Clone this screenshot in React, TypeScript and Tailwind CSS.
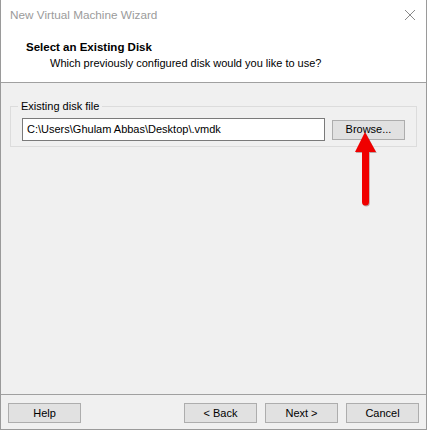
import React from 'react';

const font = { fontFamily: '"Liberation Sans", Arial, sans-serif' };

const WinButton: React.FC<{ label: string; className?: string }> = ({ label, className = '' }) => (
  <button
    className={`h-[20px] w-[73px] border border-[#adadad] bg-[#e1e1e1] text-[11px] leading-none text-black ${className}`}
  >
    {label}
  </button>
);

const App: React.FC = () => {
  return (
    <div className="w-[428px] h-[430px] bg-white" style={font}>
      <div className="relative flex h-full w-[427px] flex-col border border-t-0 border-[#9a9a9a] bg-[#f0f0f0]">
        {/* title bar + header */}
        <div className="h-[83px] border-b border-[#a0a0a0] bg-white">
          <div className="flex h-[30px] items-center justify-between pl-[9px] pr-[9px]">
            <span className="text-[11.75px] text-[#9b9b9b]">New Virtual Machine Wizard</span>
            <svg width="12" height="12" viewBox="0 0 12 12" className="mr-[1px]">
              <path d="M1 1 L11 11 M11 1 L1 11" stroke="#8a8a8a" strokeWidth="1" />
            </svg>
          </div>
          <div className="pl-[25px] pt-[9px]">
            <div className="text-[11.5px] font-bold leading-[16px] text-black">Select an Existing Disk</div>
            <div className="pl-[24px] text-[11px] leading-[16px] text-black">
              Which previously configured disk would you like to use?
            </div>
          </div>
        </div>

        {/* body */}
        <div className="flex-1 px-[9px] pt-[16px]">
          <fieldset className="h-[48px] border border-[#dcdcdc] px-[11px] pb-0 pt-0">
            <legend className="-ml-[4px] px-[3px] text-[11px] leading-[14px] text-black">Existing disk file</legend>
            <div className="mt-[5px] flex items-center gap-[7px]">
              <div className="flex h-[23px] w-[303px] items-center border border-[#7a7a7a] bg-white pl-[4px] text-[11px] text-black">
                C:\Users\Ghulam Abbas\Desktop\.vmdk
              </div>
              <WinButton label="Browse..." />
            </div>
          </fieldset>
        </div>

        {/* footer */}
        <div className="h-[35px] border-t border-[#a0a0a0] px-[7px] pt-[8px]">
          <div className="flex items-center">
            <WinButton label="Help" />
            <div className="flex-1" />
            <div className="flex gap-[8px]">
              <WinButton label="< Back" />
              <WinButton label="Next >" />
              <WinButton label="Cancel" />
            </div>
          </div>
        </div>

        {/* red arrow pointing at Browse */}
        <svg
          className="absolute left-[350px] top-[128px]"
          width="30"
          height="82"
          viewBox="0 0 30 82"
        >
          <path
            d="M14 4 L25 24 L18 24 L18 74 Q18 77.5 14.5 77.5 Q11 77.5 11 74 L11 24 L4 24 Z"
            fill="#400"
            opacity="0.3"
            transform="translate(0.8 1)"
          />
          <path
            d="M14 4 L25 24 L18 24 L18 74 Q18 77.5 14.5 77.5 Q11 77.5 11 74 L11 24 L4 24 Z"
            fill="#f00000"
          />
        </svg>
      </div>
    </div>
  );
};

export default App;
